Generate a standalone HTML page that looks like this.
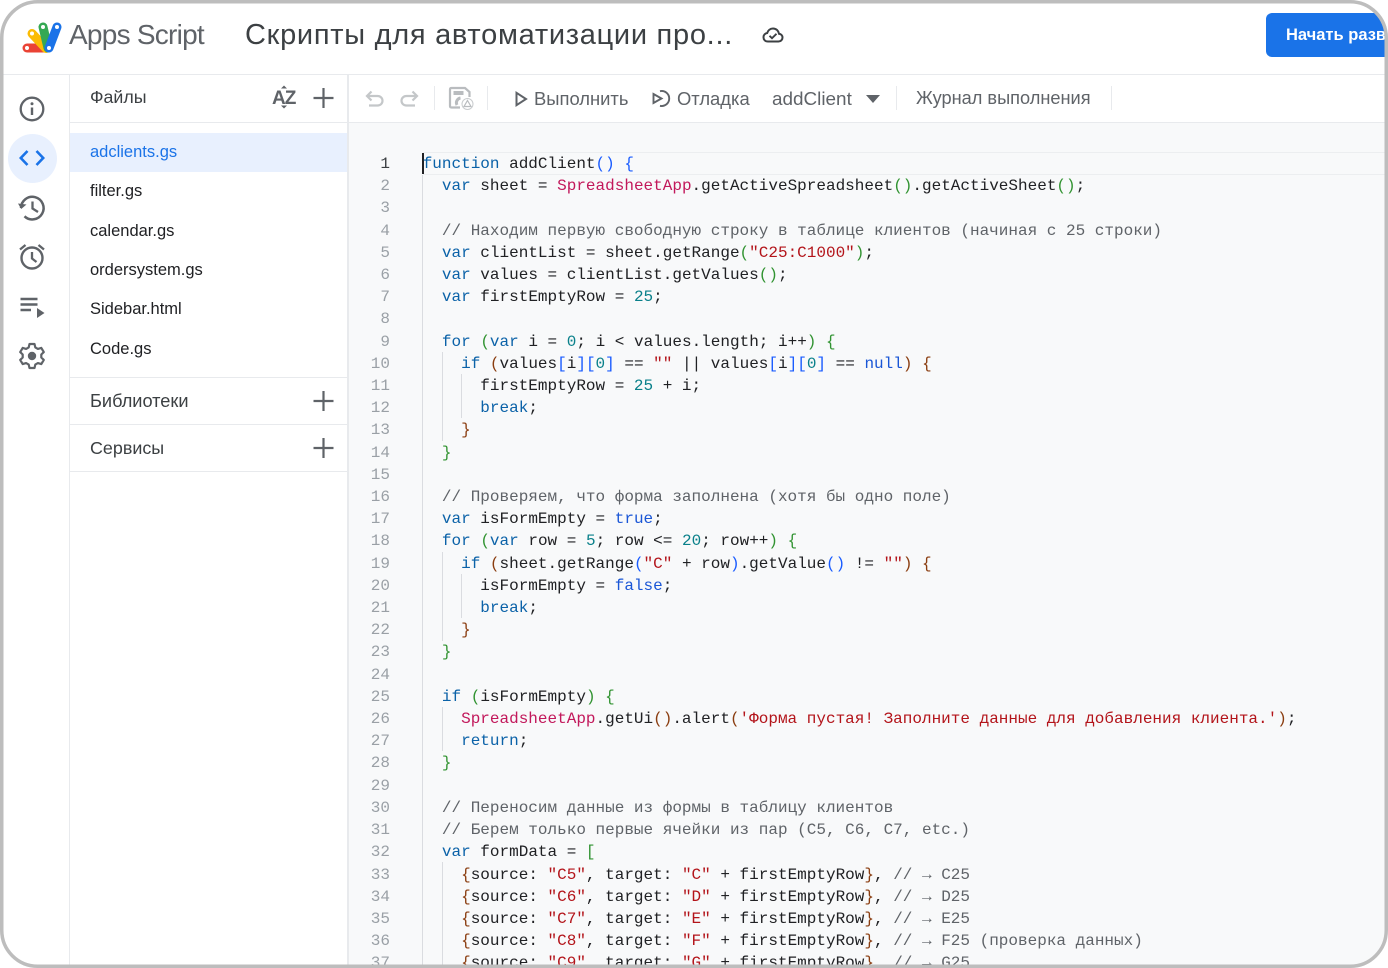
<!DOCTYPE html>
<html lang="ru"><head><meta charset="utf-8"><title>Apps Script</title>
<style>
html,body{margin:0;padding:0;background:#fff}
#p{position:relative;width:1388px;height:968px;overflow:hidden;background:#fff;font-family:"Liberation Sans","Noto Sans CJK SC",sans-serif;color:#3c4043}
.a{position:absolute;white-space:pre}
.h{position:absolute;background:#e8eaed}
svg{position:absolute;overflow:visible}
#code{position:absolute;left:422.700px;top:153px;font:16px/22.2px "Liberation Mono",monospace;color:#202124;white-space:pre;margin:0}
#nums{position:absolute;left:350px;width:40px;top:153px;font:16px/22.2px "Liberation Mono",monospace;color:#9aa0a6;text-align:right;white-space:pre;margin:0}
.k{color:#0b62a8}.u{color:#1a56d6}.s{color:#b3141a}.c{color:#5f6368}.n{color:#09808a}.p{color:#c2185b}
.b1{color:#1a5cff}.b2{color:#319331}.b3{color:#8a3d10}
.g{position:absolute;width:1px;background:#dadce0}
.f{position:absolute;left:90px;font-size:16.500px;color:#202124;white-space:pre}
</style></head><body><div id="p">

<!-- top bar -->
<svg style="left:0;top:0" width="80" height="70" viewBox="0 0 80 70">
<g fill="none" stroke-width="9" stroke-linecap="round">
<path d="M27 48H44" stroke="#ea4335"/>
<path d="M32 33.5L46 48.5" stroke="#fbbc04"/>
<path d="M43 27L48 48" stroke="#34a853"/>
<path d="M57 27L49 48" stroke="#1a73e8"/>
</g>
<g fill="#fff"><circle cx="27" cy="48" r="2"/><circle cx="32" cy="33.5" r="2"/><circle cx="43" cy="27" r="2"/><circle cx="57" cy="27" r="2"/><circle cx="49" cy="48" r="2"/></g>
</svg>
<div class="a" style="left:69px;top:18px;font-size:28px;line-height:34px;color:#5f6368;letter-spacing:-.75px">Apps Script</div>
<div class="a" style="left:245px;top:17px;font-size:29px;line-height:36px;color:#3c4043;letter-spacing:.72px">Скрипты для автоматизации про...</div>
<svg style="left:762px;top:26px" width="22" height="18" viewBox="0 0 22 18"><path d="M6 15.5C3 15.5 1.5 13.5 1.5 11.2 1.5 9 3 7.4 5.2 7 6 4.300 8.200 2.500 11 2.500c3.300 0 5.500 2.300 6 5.200 2 .3 3.500 1.800 3.500 3.900 0 2.200-1.800 3.900-4 3.900z" fill="none" stroke="#3c4043" stroke-width="2"/><path d="M7.500 9.800L10 12.200 14.500 7.800" fill="none" stroke="#3c4043" stroke-width="1.800"/></svg>
<div class="a" style="left:1266px;top:13px;width:130px;height:44px;background:#1a73e8;border-radius:6px"></div>
<div class="a" style="left:1286px;top:25px;font-size:16.500px;line-height:20px;font-weight:bold;color:#fff;width:100px;overflow:hidden">Начать разв</div>

<!-- structural lines -->
<div class="h" style="left:0;top:74px;width:1388px;height:1px"></div>
<div class="h" style="left:69px;top:75px;width:1px;height:893px"></div>
<div class="h" style="left:347px;top:75px;width:2px;height:893px"></div>
<div class="h" style="left:70px;top:122px;width:1318px;height:1px"></div>
<div class="a" style="left:349px;top:123px;width:1039px;height:845px;background:#f8f9fa"></div>
<div class="h" style="left:70px;top:377px;width:277px;height:1px"></div>
<div class="h" style="left:70px;top:424px;width:277px;height:1px"></div>
<div class="h" style="left:70px;top:471px;width:277px;height:1px"></div>

<!-- left rail -->
<div class="a" style="left:8px;top:134px;width:49px;height:49px;border-radius:50%;background:#e8f0fe"></div>
<svg style="left:18px;top:95px" width="28" height="28" viewBox="0 0 28 28"><circle cx="14" cy="14" r="11.300" fill="none" stroke="#5f6368" stroke-width="2.300"/><path d="M14 12.500V20" stroke="#5f6368" stroke-width="2.400"/><circle cx="14" cy="8.700" r="1.500" fill="#5f6368"/></svg>
<svg style="left:18px;top:145px" width="28" height="26" viewBox="0 0 28 26"><path d="M9.500 6L2.800 13 9.500 20M18.500 6L25.200 13 18.500 20" fill="none" stroke="#1a73e8" stroke-width="2.600"/></svg>
<svg style="left:18px;top:194px" width="28" height="28" viewBox="0 0 28 28"><path d="M3 14A11.300 11.300 0 1 1 6.500 22.300" fill="none" stroke="#5f6368" stroke-width="2.500"/><path d="M0 9.500L3.200 15 8.500 10.500z" fill="#5f6368"/><path d="M14.500 7.500V14.500L20 18" fill="none" stroke="#5f6368" stroke-width="2.300"/></svg>
<svg style="left:18px;top:243px" width="28" height="28" viewBox="0 0 28 28"><circle cx="14" cy="15" r="10.500" fill="none" stroke="#5f6368" stroke-width="2.400"/><path d="M14 9V15.500L18.500 19M2 6.500L7.500 2M26 6.500L20.500 2" fill="none" stroke="#5f6368" stroke-width="2.300"/></svg>
<svg style="left:18px;top:295px" width="28" height="26" viewBox="0 0 28 26"><path d="M2.500 4H19.500M2.500 9.500H19.500M2.500 15H13" stroke="#5f6368" stroke-width="2.400" fill="none"/><path d="M19 13L26.500 18 19 23z" fill="#5f6368"/></svg>
<svg style="left:18px;top:342px" width="28" height="28" viewBox="0 0 28 28"><path d="M11.500 2H16.500L17.300 5.400 19.900 6.900 23.300 5.900 25.800 10.100 23.300 12.500V15.500L25.800 17.900 23.300 22.100 19.900 21.100 17.300 22.600 16.500 26H11.500L10.700 22.600 8.100 21.100 4.700 22.100 2.200 17.900 4.700 15.500V12.500L2.200 10.100 4.700 5.900 8.100 6.900 10.700 5.400z" fill="none" stroke="#5f6368" stroke-width="2.200" stroke-linejoin="round"/><circle cx="14" cy="14" r="4.200" fill="#5f6368"/></svg>

<!-- files panel -->
<div class="a" style="left:90px;top:87px;font-size:17.800px;line-height:21px;color:#3c4043">Файлы</div>
<div class="a" style="left:272px;top:88px;font-size:19px;line-height:22px;color:#5f6368;font-weight:bold;letter-spacing:-1px">AZ</div>
<svg style="left:272px;top:84px" width="24" height="26" viewBox="0 0 24 26"><path d="M9 4.500L12 1.500 15 4.500zM9 21.500L12 24.500 15 21.500z" fill="#5f6368"/></svg>
<svg style="left:313px;top:88px" width="21" height="21" viewBox="0 0 21 21"><path d="M10.500 0V20M.5 10H20.500" stroke="#5f6368" stroke-width="2.200"/></svg>
<div class="a" style="left:70px;top:133px;width:277px;height:39px;background:#e8f0fe"></div>
<div class="f" style="top:143px;color:#1a73e8">adclients.gs</div>
<div class="f" style="top:182px">filter.gs</div>
<div class="f" style="top:222px">calendar.gs</div>
<div class="f" style="top:261px">ordersystem.gs</div>
<div class="f" style="top:300px">Sidebar.html</div>
<div class="f" style="top:340px">Code.gs</div>
<div class="a" style="left:90px;top:391px;font-size:18.200px;line-height:21px;color:#3c4043">Библиотеки</div>
<svg style="left:313px;top:391px" width="21" height="21" viewBox="0 0 21 21"><path d="M10.500 0V20M.5 10H20.500" stroke="#5f6368" stroke-width="2.200"/></svg>
<div class="a" style="left:90px;top:438px;font-size:17.900px;line-height:21px;color:#3c4043">Сервисы</div>
<svg style="left:313px;top:438px" width="21" height="21" viewBox="0 0 21 21"><path d="M10.500 0V20M.5 10H20.500" stroke="#5f6368" stroke-width="2.200"/></svg>

<!-- toolbar -->
<svg style="left:364px;top:88px" width="56" height="22" viewBox="0 0 56 22"><g fill="none" stroke="#c4c7c9" stroke-width="2.200"><path d="M3.500 8H13.500C16.500 8 18.500 10.200 18.500 12.800 18.500 15.400 16.500 17.500 13.500 17.500H5"/><path d="M7.500 3.500L3 8 7.500 12.500"/><path d="M52.500 8H42.500C39.500 8 37.500 10.200 37.500 12.800 37.500 15.400 39.500 17.500 42.500 17.500H51"/><path d="M48.500 3.500L53 8 48.500 12.500"/></g></svg>
<div class="h" style="left:434px;top:86px;width:1px;height:24px"></div>
<svg style="left:448px;top:86px" width="26" height="24" viewBox="0 0 26 24"><path d="M12 21.500H3.500Q2 21.500 2 20V3.500Q2 2 3.500 2H17L21.500 6V11" fill="none" stroke="#b9bcbf" stroke-width="2.200"/><path d="M5.500 5H15.500V9H5.500z" fill="#b9bcbf"/><path d="M12.500 12A4.800 4.800 0 0 0 9 19" fill="none" stroke="#b9bcbf" stroke-width="3"/><circle cx="19.500" cy="18" r="5.500" fill="none" stroke="#c9ccce" stroke-width="1"/><path d="M19.500 14.500L23 20.500H16z" fill="none" stroke="#b9bcbf" stroke-width="1.200"/></svg>
<div class="h" style="left:487px;top:86px;width:1px;height:24px"></div>
<svg style="left:515px;top:91px" width="13" height="16" viewBox="0 0 13 16"><path d="M1.500 1.800L11 8 1.500 14.200z" fill="none" stroke="#5f6368" stroke-width="2"/></svg>
<div class="a" style="left:534px;top:88px;font-size:18.400px;line-height:21px;color:#5f6368">Выполнить</div>
<svg style="left:652px;top:89px" width="20" height="19" viewBox="0 0 20 19"><path d="M8 2.200A7.500 7.500 0 1 1 8 16.800" fill="none" stroke="#5f6368" stroke-width="1.900"/><path d="M1.500 5L9.500 9.500 1.500 14z" fill="none" stroke="#5f6368" stroke-width="1.900"/></svg>
<div class="a" style="left:677px;top:88px;font-size:18.400px;line-height:21px;color:#5f6368">Отладка</div>
<div class="a" style="left:772px;top:89px;font-size:18.900px;line-height:21px;color:#5f6368">addClient</div>
<svg style="left:866px;top:95px" width="14" height="8" viewBox="0 0 14 8"><path d="M0 0H14L7 8z" fill="#5f6368"/></svg>
<div class="h" style="left:896px;top:86px;width:1px;height:24px"></div>
<div class="a" style="left:916px;top:88px;font-size:18.200px;line-height:21px;color:#5f6368">Журнал выполнения</div>
<div class="h" style="left:1111px;top:86px;width:1px;height:24px"></div>

<!-- editor -->
<div class="a" style="left:423px;top:152px;width:965px;height:21px;border-top:1px solid #eceef0;border-bottom:1px solid #eceef0"></div>
<div class="g" style="left:422px;top:175px;height:793px"></div>
<div class="g" style="left:442px;top:352px;height:89px"></div>
<div class="g" style="left:461px;top:374px;height:44px"></div>
<div class="g" style="left:442px;top:552px;height:89px"></div>
<div class="g" style="left:461px;top:574px;height:44px"></div>
<div class="g" style="left:442px;top:707px;height:44px"></div>
<div class="g" style="left:442px;top:862px;height:106px"></div>
<div class="a" style="left:422px;top:153px;width:2px;height:21px;background:#202124"></div>
<pre id="nums"><span style="color:#3c4043">1</span>
2
3
4
5
6
7
8
9
10
11
12
13
14
15
16
17
18
19
20
21
22
23
24
25
26
27
28
29
30
31
32
33
34
35
36
37</pre>
<pre id="code"><span class="k">function</span> addClient<span class="b1">()</span> <span class="b1">{</span>
  <span class="k">var</span> sheet = <span class="p">SpreadsheetApp</span>.getActiveSpreadsheet<span class="b2">()</span>.getActiveSheet<span class="b2">()</span>;

  <span class="c">// Находим первую свободную строку в таблице клиентов (начиная с 25 строки)</span>
  <span class="k">var</span> clientList = sheet.getRange<span class="b2">(</span><span class="s">"C25:C1000"</span><span class="b2">)</span>;
  <span class="k">var</span> values = clientList.getValues<span class="b2">()</span>;
  <span class="k">var</span> firstEmptyRow = <span class="n">25</span>;

  <span class="k">for</span> <span class="b2">(</span><span class="k">var</span> i = <span class="n">0</span>; i &lt; values.length; i++<span class="b2">)</span> <span class="b2">{</span>
    <span class="k">if</span> <span class="b3">(</span>values<span class="b1">[</span>i<span class="b1">][</span><span class="n">0</span><span class="b1">]</span> == <span class="s">""</span> || values<span class="b1">[</span>i<span class="b1">][</span><span class="n">0</span><span class="b1">]</span> == <span class="u">null</span><span class="b3">)</span> <span class="b3">{</span>
      firstEmptyRow = <span class="n">25</span> + i;
      <span class="k">break</span>;
    <span class="b3">}</span>
  <span class="b2">}</span>

  <span class="c">// Проверяем, что форма заполнена (хотя бы одно поле)</span>
  <span class="k">var</span> isFormEmpty = <span class="u">true</span>;
  <span class="k">for</span> <span class="b2">(</span><span class="k">var</span> row = <span class="n">5</span>; row &lt;= <span class="n">20</span>; row++<span class="b2">)</span> <span class="b2">{</span>
    <span class="k">if</span> <span class="b3">(</span>sheet.getRange<span class="b1">(</span><span class="s">"C"</span> + row<span class="b1">)</span>.getValue<span class="b1">()</span> != <span class="s">""</span><span class="b3">)</span> <span class="b3">{</span>
      isFormEmpty = <span class="u">false</span>;
      <span class="k">break</span>;
    <span class="b3">}</span>
  <span class="b2">}</span>

  <span class="k">if</span> <span class="b2">(</span>isFormEmpty<span class="b2">)</span> <span class="b2">{</span>
    <span class="p">SpreadsheetApp</span>.getUi<span class="b3">()</span>.alert<span class="b3">(</span><span class="s">'Форма пустая! Заполните данные для добавления клиента.'</span><span class="b3">)</span>;
    <span class="k">return</span>;
  <span class="b2">}</span>

  <span class="c">// Переносим данные из формы в таблицу клиентов</span>
  <span class="c">// Берем только первые ячейки из пар (C5, C6, C7, etc.)</span>
  <span class="k">var</span> formData = <span class="b2">[</span>
    <span class="b3">{</span>source: <span class="s">"C5"</span>, target: <span class="s">"C"</span> + firstEmptyRow<span class="b3">}</span>, <span class="c">// → C25</span>
    <span class="b3">{</span>source: <span class="s">"C6"</span>, target: <span class="s">"D"</span> + firstEmptyRow<span class="b3">}</span>, <span class="c">// → D25</span>
    <span class="b3">{</span>source: <span class="s">"C7"</span>, target: <span class="s">"E"</span> + firstEmptyRow<span class="b3">}</span>, <span class="c">// → E25</span>
    <span class="b3">{</span>source: <span class="s">"C8"</span>, target: <span class="s">"F"</span> + firstEmptyRow<span class="b3">}</span>, <span class="c">// → F25 (проверка данных)</span>
    <span class="b3">{</span>source: <span class="s">"C9"</span>, target: <span class="s">"G"</span> + firstEmptyRow<span class="b3">}</span>, <span class="c">// → G25</span></pre>

<!-- device frame -->
<svg style="left:0;top:0;pointer-events:none" width="1388" height="968" viewBox="0 0 1388 968">
<path fill-rule="evenodd" fill="#fff" d="M-10-10H1398V978H-10zM38 1.500H1350A36.500 36.500 0 0 1 1386.500 38V930A36.500 36.500 0 0 1 1350 966.500H38A36.500 36.500 0 0 1 1.500 930V38A36.500 36.500 0 0 1 38 1.500z"/>
<rect x="1.750" y="1.750" width="1384.500" height="964.500" rx="36" ry="36" fill="none" stroke="#bdbdbd" stroke-width="3.500"/>
</svg>
</div></body></html>
